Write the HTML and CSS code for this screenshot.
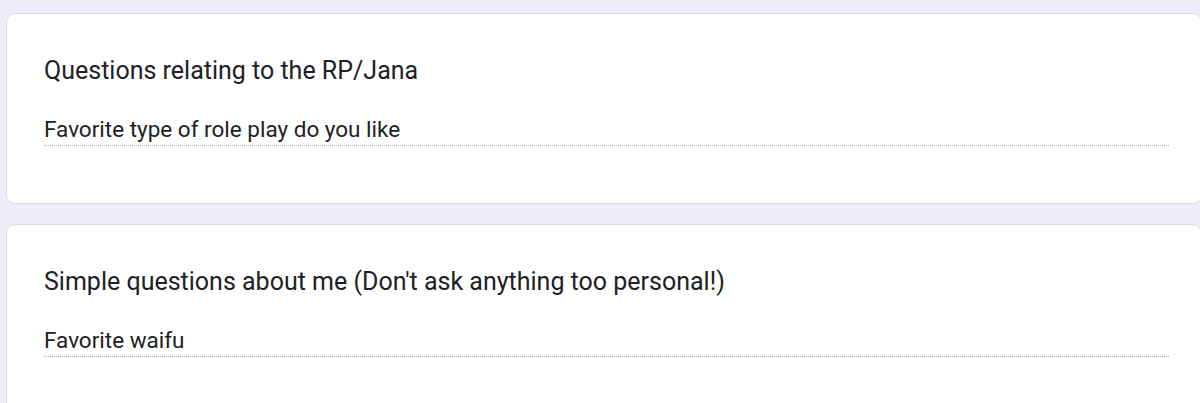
FILE: index.html
```html
<!DOCTYPE html>
<html>
<head>
<meta charset="utf-8">
<link rel="stylesheet" href="styles.css">
</head>
<body>
<main class="page">
  <section class="card">
    <h2 class="card-title">Questions relating to the RP/Jana</h2>
    <div class="answer">Favorite type of role play do you like</div>
  </section>
  <section class="card">
    <h2 class="card-title">Simple questions about me (Don't ask anything too personal!)</h2>
    <div class="answer">Favorite waifu</div>
  </section>
</main>
</body>
</html>
```
FILE: styles.css
```css
html, body {
  margin: 0;
  padding: 0;
  background: #eeecf9;
  font-family: Roboto, "Noto Sans", Arial, sans-serif;
  color: #202124;
  overflow: hidden;
}
.page {
  display: flex;
  flex-direction: column;
  gap: 20px;
  padding: 13px 0 0 6px;
}
.card {
  background: #fff;
  border: 1px solid #dadce0;
  border-radius: 9px;
  height: 189px;
  padding: 0 32px 0 37px;
  margin-right: -2px;
}
.card-title {
  margin: 42px 0 0 0;
  font-size: 25px;
  font-weight: 400;
  line-height: 29px;
}
.answer {
  margin-top: 31px;
  font-size: 22.5px;
  line-height: 26px;
  padding-bottom: 3px;
  border-bottom: 1px dotted #aaaaaa;
}
```
